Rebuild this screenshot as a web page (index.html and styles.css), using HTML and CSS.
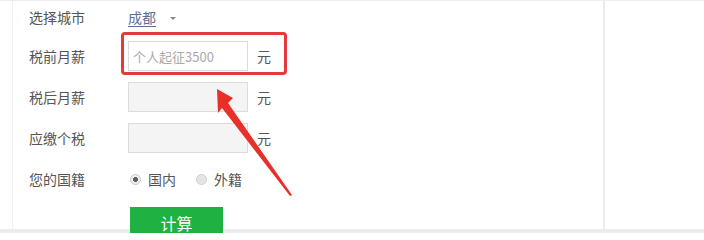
FILE: index.html
```html
<!DOCTYPE html>
<html lang="zh">
<head>
<meta charset="utf-8">
<title>个税计算</title>
<link rel="stylesheet" href="styles.css">
</head>
<body>
<div class="page">
  <div class="panel">
    <div class="form">
      <div class="row row-city">
        <span class="label">选择城市</span>
        <a class="city" href="#">成都</a>
        <span class="caret"></span>
      </div>
      <div class="row">
        <span class="label">税前月薪</span>
        <input class="field" type="text" placeholder="个人起征3500">
        <span class="unit">元</span>
      </div>
      <div class="row">
        <span class="label">税后月薪</span>
        <input class="field field-ro" type="text" readonly>
        <span class="unit">元</span>
      </div>
      <div class="row">
        <span class="label">应缴个税</span>
        <input class="field field-ro" type="text" readonly>
        <span class="unit">元</span>
      </div>
      <div class="row">
        <span class="label">您的国籍</span>
        <span class="radio radio-on"></span><span class="opt">国内</span>
        <span class="radio radio-off"></span><span class="opt">外籍</span>
      </div>
      <div class="row row-btn">
        <span class="label"></span>
        <button class="btn" type="button">计算</button>
      </div>
    </div>
    <div class="highlight"></div>
  </div>
</div>
<div class="band"></div>
<svg class="arrow" width="704" height="233" viewBox="0 0 704 233">
  <polygon points="217,89 233,98 228,103 292,195 290,196 222,108 218,113" fill="#e8302a"/>
</svg>
</body>
</html>
```
FILE: styles.css
```css
html, body {
  margin: 0;
  padding: 0;
  background: #fff;
}
body {
  position: relative;
  width: 704px;
  height: 233px;
  overflow: hidden;
  font-family: "Noto Sans CJK SC", "Noto Sans", sans-serif;
  color: #555;
}
.page {
  display: flex;
  height: 228px;
  border-top: 1px solid #eee;
  padding-left: 12px;
}
.panel {
  position: relative;
  box-sizing: border-box;
  width: 593px;
  border-left: 1px solid #f1f1f1;
  border-right: 2px solid #ececec;
  padding-left: 16px;
}
.form {
  display: flex;
  flex-direction: column;
  gap: 11px;
  padding-top: 3px;
}
.row {
  display: flex;
  align-items: center;
  height: 30px;
}
.row-city {
  height: 26px;
}
.label {
  width: 99px;
  font-size: 14px;
  color: #555;
  flex: none;
}
.city {
  font-size: 14px;
  color: #5b6f98;
  text-decoration: underline;
  text-underline-offset: 3px;
}
.caret {
  width: 0;
  height: 0;
  margin-left: 14px;
  margin-top: 2px;
  border-left: 3px solid transparent;
  border-right: 3px solid transparent;
  border-top: 3px solid #888;
}
.field {
  box-sizing: border-box;
  width: 120px;
  height: 30px;
  border: 1px solid #dcdcdc;
  padding: 0 4px;
  font-family: "Noto Sans CJK SC", "Noto Sans", sans-serif;
  font-size: 13px;
  color: #555;
  background: #fff;
  outline: none;
}
.field::placeholder {
  color: #aaa;
}
.field-ro {
  background: #f4f4f4;
}
.unit {
  margin-left: 9px;
  font-size: 14px;
}
.radio {
  box-sizing: border-box;
  width: 11px;
  height: 11px;
  border-radius: 50%;
  margin-left: 2px;
  flex: none;
}
.radio-on {
  border: 1px solid #c8c8c8;
  background: radial-gradient(circle, #5f5f5f 0 2.2px, #efefef 2.8px);
}
.radio-off {
  margin-left: 20px;
  border: 1px solid #cfcfcf;
  background: #e4e4e4;
}
.opt {
  margin-left: 7px;
  font-size: 14px;
}
.row-btn {
  margin-top: 2px;
  height: 32px;
}
.btn {
  margin-left: 2px;
  width: 93px;
  height: 32px;
  border: none;
  background: #1fb141;
  color: #fff;
  font-family: "Noto Sans CJK SC", "Noto Sans", sans-serif;
  font-size: 16px;
  padding: 0;
}
.highlight {
  position: absolute;
  left: 108px;
  top: 31px;
  box-sizing: border-box;
  width: 166px;
  height: 43px;
  border: 3px solid #e33b3b;
  border-radius: 4px;
}
.band {
  height: 4px;
  background: #ececec;
}
.arrow {
  position: absolute;
  left: 0;
  top: 0;
}
```
